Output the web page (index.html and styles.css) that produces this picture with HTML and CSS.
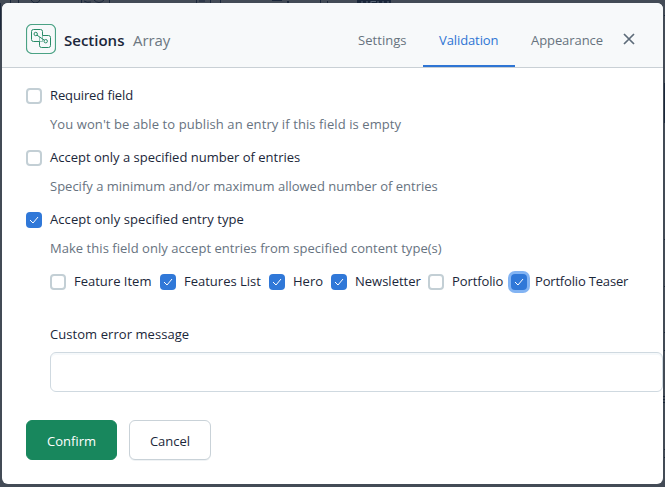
FILE: index.html
```html
<!DOCTYPE html>
<html lang="en">
<head>
<meta charset="utf-8">
<title>Sections validation</title>
<link rel="stylesheet" href="styles.css">
</head>
<body>
<div class="backdrop" aria-hidden="true">
  <svg width="665" height="487" fill="#1b273a">
    <path d="M0 3h1v27H0zM10 0h1v3h-1zM18 0h1v3h-1zM81 0h1v3h-1zM109 0h1v3h-1zM196 0h1v3h-1zM210 0h1v3h-1zM220 0h1v3h-1zM272 0h10v1h-10zM287 1h2v2h-2zM320 0h1v3h-1zM327 1h1v2h-1zM357 0h34v3h-34zM664 15h1v1h-1zM664 83h1v40h-1zM664 239h1v1h-1zM664 286h1v1h-1zM664 332h1v1h-1zM664 350h1v1h-1zM663 396h2v1h-2zM663 399h2v1h-2zM663 402h2v1h-2zM664 449h1v1h-1zM664 457h1v1h-1z"/>
    <path fill="none" stroke="#1b273a" d="M31 0q2 3 4 3q4 0 5-3M84 1q3 2 7 1M94 0q5 5 10 0M199 1h6"/>
    <path fill="none" stroke="#586574" d="M362 1v2M367 1v2M371 1.500h5M371 1v2M378 1v2M383 1v2M388 1v2"/>
  </svg>
</div>
<main class="modal">
  <header class="header">
    <svg class="type-icon" width="30" height="30" fill="none" stroke="#288b67" stroke-width="1">
      <rect x=".5" y=".5" width="29" height="29" rx="5.500" stroke="#4aa284" stroke-width="1.200"/>
      <path d="M13.500 17.500h-6q-2 0-2-2v-8q0-2 2-2h7q2 0 2 2v4"/>
      <path d="M16.500 11.500h6q2 0 2 2v8q0 2-2 2h-7q-2 0-2-2v-4"/>
      <path d="M13.500 17.500h3v-6M13.500 17.500v-4.500" stroke-opacity=".5"/>
      <circle cx="9.700" cy="10" r="1.700"/>
      <circle cx="19.700" cy="17.200" r="1.700"/>
      <path d="M11 11.200L18.400 16.200"/>
    </svg>
    <h1 class="title">Sections</h1>
    <span class="subtitle">Array</span>
    <nav class="tabs">
      <a class="tab">Settings</a>
      <a class="tab active">Validation</a>
      <a class="tab appearance">Appearance</a>
    </nav>
    <svg class="close" width="12" height="12" fill="none" stroke="#5d6b79" stroke-width="1.700"><path d="M1 1l10 10M11 1L1 11"/></svg>
  </header>
  <section class="body">
    <div class="rule">
      <span class="box"></span><span class="label l-required">Required field</span>
    </div>
    <p class="help h-required">You won't be able to publish an entry if this field is empty</p>
    <div class="rule">
      <span class="box"></span><span class="label">Accept only a specified number of entries</span>
    </div>
    <p class="help">Specify a minimum and/or maximum allowed number of entries</p>
    <div class="rule">
      <span class="box checked"><svg width="16" height="16"><path d="M4 8l3 3 5-6"/></svg></span><span class="label l-type">Accept only specified entry type</span>
    </div>
    <p class="help h-type">Make this field only accept entries from specified content type(s)</p>
    <div class="types">
      <div class="type t1"><span class="box"></span><span class="label">Feature Item</span></div>
      <div class="type t2"><span class="box checked"><svg width="16" height="16"><path d="M4 8l3 3 5-6"/></svg></span><span class="label">Features List</span></div>
      <div class="type t3"><span class="box checked"><svg width="16" height="16"><path d="M4 8l3 3 5-6"/></svg></span><span class="label">Hero</span></div>
      <div class="type t4"><span class="box checked"><svg width="16" height="16"><path d="M4 8l3 3 5-6"/></svg></span><span class="label">Newsletter</span></div>
      <div class="type t5"><span class="box"></span><span class="label">Portfolio</span></div>
      <div class="type t6"><span class="box checked focus"><svg width="16" height="16"><path d="M4 8l3 3 5-6"/></svg></span><span class="label">Portfolio Teaser</span></div>
    </div>
    <label class="error-label" for="error">Custom error message</label>
    <input class="error-input" id="error" type="text">
    <footer class="actions">
      <button class="button confirm">Confirm</button>
      <button class="button cancel">Cancel</button>
    </footer>
  </section>
</main>
</body>
</html>
```
FILE: styles.css
```css
* { box-sizing: border-box; }
body {
  margin: 0;
  width: 665px;
  height: 487px;
  overflow: hidden;
  padding: 3px 2px;
  background: #434b56;
  color: #1b273a;
  font: 13px/20px "Open Sans", "Noto Sans", sans-serif;
}
.backdrop { position: absolute; top: 0; left: 0; z-index: -1; }
.backdrop svg { display: block; }
.modal {
  width: 661px;
  height: 481px;
  overflow: hidden;
  border-radius: 6px;
  background: #fff;
}
.header {
  display: flex;
  align-items: center;
  height: 65px;
  padding: 7px 28px 0 24px;
  background: #f7f9fa;
  border-bottom: 1px solid #c9d0d5;
  white-space: nowrap;
}
.type-icon { flex: none; }
.title { width: 61px; margin: 3px 0 0 8px; font-size: 15px; line-height: 24px; font-weight: 600; }
.subtitle { width: 38px; margin: 3px 0 0 8px; font-size: 15px; letter-spacing: -.1px; color: #6c7781; }
.tabs { display: flex; height: 57px; margin-left: auto; }
.tab { width: 81px; padding: 20px 0 0 16px; letter-spacing: .05px; color: #67737e; }
.tab.active { width: 92px; letter-spacing: -.1px; color: #2e75d4; border-bottom: 2px solid #2e75d4; }
.tab.appearance { width: 108px; letter-spacing: -.08px; }
.close { flex: none; }
.body { padding: 16px 0 0 24px; white-space: nowrap; }
.rule, .type { display: flex; align-items: center; height: 22px; }
.box {
  flex: none;
  width: 16px;
  height: 16px;
  margin-right: 8px;
  border: 2px solid #c3cfd5;
  border-radius: 4px;
  background: #fff;
}
.rule .box, .type .box { margin-top: 2px; }
.box.checked { border: 0; background: #3078d8; }
.box svg { display: block; fill: none; stroke: #fff; stroke-width: 1; }
.box.focus { box-shadow: 0 0 0 3px #83b4f3; }
.l-required { letter-spacing: -.12px; }
.l-type { letter-spacing: .07px; }
.help { height: 20px; margin: 8px 0 12px 24px; color: #67737f; }
.h-required { letter-spacing: .09px; }
.h-type { letter-spacing: .04px; }
.types { display: flex; margin: 0 0 0 24px; height: 22px; }
.t1 { width: 110px; }
.t2 { width: 109px; }
.t3 { width: 62px; }
.t4 { width: 97px; }
.t5 { width: 83px; letter-spacing: -.1px; }
.t6 { letter-spacing: -.18px; }
.error-label { display: block; height: 20px; margin: 32px 0 8px 24px; letter-spacing: .06px; }
.error-input {
  display: block;
  width: 613px;
  height: 40px;
  margin-left: 24px;
  border: 1px solid #cfd9e0;
  border-radius: 6px;
  background: #fff;
  box-shadow: inset 0 2px 0 #f6f9fb;
}
.actions { display: flex; gap: 12px; margin-top: 28px; }
.button {
  height: 40px;
  padding: 2px 0 0;
  border: 1px solid #c9d2d8;
  border-radius: 6px;
  font: inherit;
  background: #fff;
  color: #1b273a;
}
.confirm { width: 91px; border-color: #18875d; background: #18875d; color: #fff; }
.cancel { width: 82px; box-shadow: 0 1px 0 #f0f3f5; }
```
